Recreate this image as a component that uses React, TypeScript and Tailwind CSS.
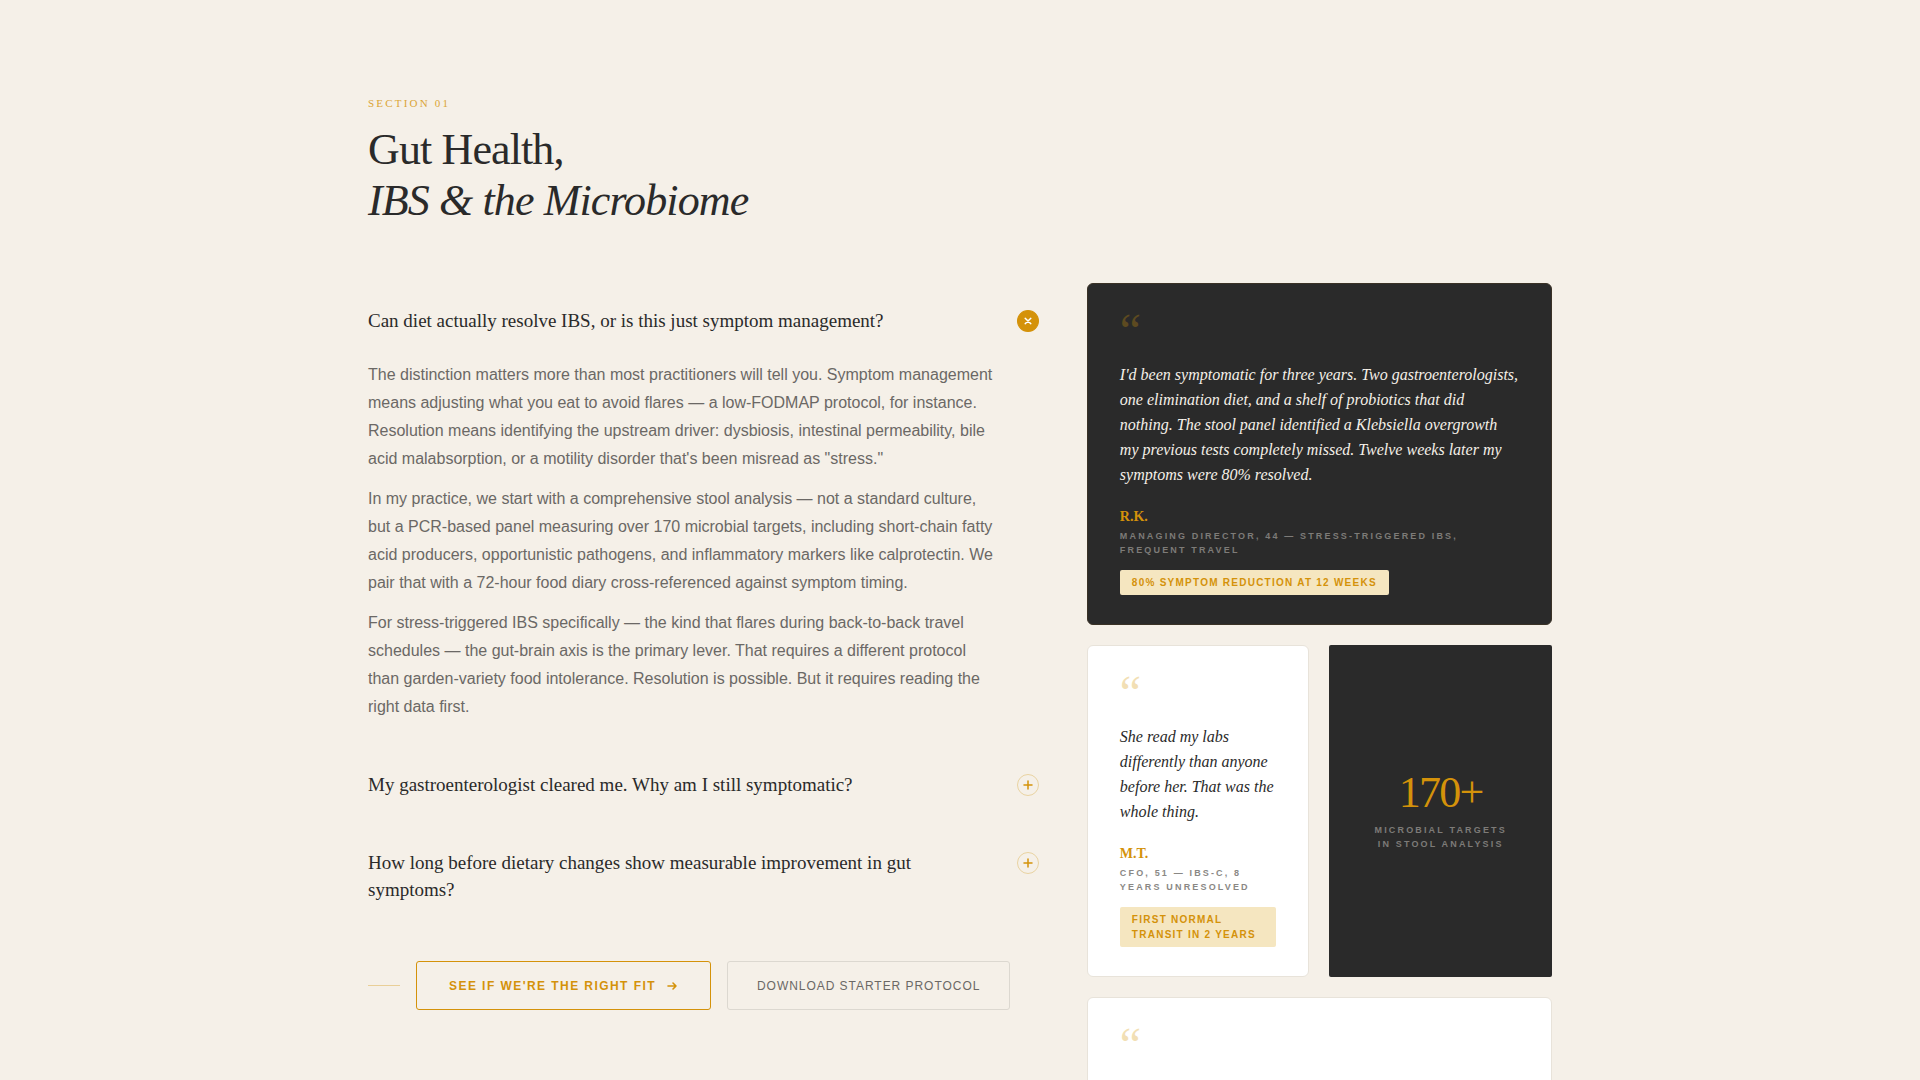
import { ReactNode, useState } from 'react';

const faqs = [
  {
    question: 'Can diet actually resolve IBS, or is this just symptom management?',
    answer: [
      'The distinction matters more than most practitioners will tell you. Symptom management means adjusting what you eat to avoid flares — a low-FODMAP protocol, for instance. Resolution means identifying the upstream driver: dysbiosis, intestinal permeability, bile acid malabsorption, or a motility disorder that\'s been misread as "stress."',
      'In my practice, we start with a comprehensive stool analysis — not a standard culture, but a PCR-based panel measuring over 170 microbial targets, including short-chain fatty acid producers, opportunistic pathogens, and inflammatory markers like calprotectin. We pair that with a 72-hour food diary cross-referenced against symptom timing.',
      'For stress-triggered IBS specifically — the kind that flares during back-to-back travel schedules — the gut-brain axis is the primary lever. That requires a different protocol than garden-variety food intolerance. Resolution is possible. But it requires reading the right data first.',
    ],
  },
  {
    question: 'My gastroenterologist cleared me. Why am I still symptomatic?',
    answer: [],
  },
  {
    question:
      'How long before dietary changes show measurable improvement in gut symptoms?',
    answer: [],
  },
];

const serif = "font-['Liberation_Serif',serif]";

const ToggleIcon = ({ open }: { open: boolean }) => (
  <span
    className={
      'mt-[3px] flex h-[22px] w-[22px] shrink-0 items-center justify-center rounded-full border ' +
      (open
        ? 'rotate-45 border-[#d4920a] bg-[#d4920a] text-white'
        : 'border-[#e9d3a1] text-[#d4920a]')
    }
  >
    <svg width="10" height="10" viewBox="0 0 10 10" fill="none" aria-hidden>
      <path
        d="M5 1v8M1 5h8"
        stroke="currentColor"
        strokeWidth="1.5"
        strokeLinecap="round"
      />
    </svg>
  </span>
);

const Faq = () => {
  const [openIndex, setOpenIndex] = useState(0);

  return (
    <div>
      {faqs.map((faq, i) => (
        <div key={faq.question}>
          <h3>
            <button
              className="flex w-full cursor-pointer items-start justify-between gap-6 pt-6 pb-[27px] text-left"
              aria-expanded={openIndex === i}
              onClick={() => setOpenIndex(openIndex === i ? -1 : i)}
            >
              <span className={serif + ' max-w-[600px] text-[19px] leading-[27px] text-[#2a2a2a]'}>
                {faq.question}
              </span>
              <ToggleIcon open={openIndex === i} />
            </button>
          </h3>
          {openIndex === i && faq.answer.length > 0 && (
            <div className="flex flex-col gap-3 pr-10 pb-[26px] text-base leading-7 text-[#6b6865]">
              {faq.answer.map((p) => (
                <p key={p}>{p}</p>
              ))}
            </div>
          )}
        </div>
      ))}
    </div>
  );
};

const QuoteMark = ({ dark }: { dark?: boolean }) => (
  <div
    className={
      serif +
      ' mb-3 text-5xl leading-[38px] ' +
      (dark ? 'text-[#5d4a20]' : 'text-[#f2dfb5]')
    }
    aria-hidden
  >
    “
  </div>
);

type TestimonialProps = {
  dark?: boolean;
  name: string;
  role: string;
  result: string;
  children: ReactNode;
};

const Testimonial = ({ dark, name, role, result, children }: TestimonialProps) => (
  <figure
    className={
      'rounded-md border px-8 pt-7 pb-[29px] ' +
      (dark ? 'border-[#3a3226] bg-[#2a2a2a]' : 'border-[#e8e3da] bg-white')
    }
  >
    <QuoteMark dark={dark} />
    <blockquote
      className={
        serif +
        ' mb-5 text-base leading-[25px] italic ' +
        (dark ? 'text-[#f5f0e8]' : 'text-[#2a2a2a]')
      }
    >
      {children}
    </blockquote>
    <figcaption>
      <div className={serif + ' text-sm leading-5 font-bold text-[#d4920a]'}>
        {name}
      </div>
      <div
        className={
          'mt-[2px] mb-[13px] text-[9px] leading-[14px] font-bold tracking-[0.24em] uppercase ' +
          (dark ? 'text-[#7d7b78]' : 'text-[#8a8885]')
        }
      >
        {role}
      </div>
      <span className="inline-block rounded-xs bg-[#f5e6c0] px-3 py-[5px] align-top text-[10px] leading-[15px] font-bold tracking-[0.125em] text-[#d4920a] uppercase">
        {result}
      </span>
    </figcaption>
  </figure>
);

const Actions = () => (
  <div className="mt-[31px] flex items-center gap-4">
    <span className="h-px w-8 bg-[#e9cf98]"></span>
    <a
      href="#fit"
      className="flex h-[49px] items-center gap-[10px] rounded-[3px] border border-[#d4920a] px-8 text-xs font-bold tracking-[0.12em] text-[#d4920a] uppercase"
    >
      See if we're the right fit
      <svg width="12" height="12" viewBox="0 0 12 12" fill="none" aria-hidden>
        <path
          d="M2 6h8M7 3l3 3-3 3"
          stroke="currentColor"
          strokeWidth="1.6"
          strokeLinecap="round"
          strokeLinejoin="round"
        />
      </svg>
    </a>
    <a
      href="#protocol"
      className="flex h-[49px] items-center rounded-[3px] border border-[#dcd8d0] px-[29px] text-xs tracking-[0.08em] text-[#6b6865] uppercase"
    >
      Download starter protocol
    </a>
  </div>
);

export default function App() {
  return (
    <main className="min-h-screen bg-[#f5f0e8] font-['Liberation_Sans',sans-serif]">
      <section className="mx-auto max-w-[1280px] px-12 pt-[95px]">
        <header>
          <p className={serif + ' text-[11px] leading-4 tracking-[0.2em] text-[#dba536] uppercase'}>
            Section 01
          </p>
          <h2 className={serif + ' mt-[13px] text-[44px] leading-[51px] tracking-[-0.02em] text-[#2a2a2a]'}>
            Gut Health,
            <br />
            <em>IBS & the Microbiome</em>
          </h2>
        </header>

        <div className="mt-[57px] grid grid-cols-[75fr_52fr] items-start gap-12">
          <div>
            <Faq />
            <Actions />
          </div>

          <aside className="grid grid-cols-2 gap-5">
            <div className="col-span-2">
              <Testimonial
                dark
                name="R.K."
                role="Managing Director, 44 — Stress-triggered IBS, frequent travel"
                result="80% symptom reduction at 12 weeks"
              >
                I'd been symptomatic for three years. Two gastroenterologists,
                one elimination diet, and a shelf of probiotics that did
                nothing. The stool panel identified a Klebsiella overgrowth my
                previous tests completely missed. Twelve weeks later my symptoms
                were 80% resolved.
              </Testimonial>
            </div>
            <Testimonial
              name="M.T."
              role="CFO, 51 — IBS-C, 8 years unresolved"
              result="First normal transit in 2 years"
            >
              She read my labs differently than anyone before her. That was the
              whole thing.
            </Testimonial>
            <div className="flex flex-col items-center justify-center rounded-xs bg-[#2a2a2a] p-6 text-center">
              <div className={serif + ' text-[44px] leading-[44px] tracking-[-0.04em] text-[#d4920a]'}>
                170+
              </div>
              <div className="mt-2 text-[9px] leading-[14px] font-bold tracking-[0.24em] text-[#7d7b78] uppercase">
                Microbial targets
                <br />
                in stool analysis
              </div>
            </div>
            <div className="col-span-2 min-h-80 rounded-md border border-[#e8e3da] bg-white px-8 py-7">
              <QuoteMark />
            </div>
          </aside>
        </div>
      </section>
    </main>
  );
}
